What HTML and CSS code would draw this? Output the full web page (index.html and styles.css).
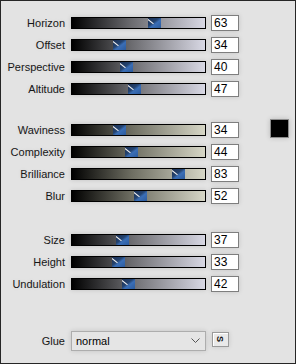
FILE: index.html
```html
<!DOCTYPE html>
<html lang="en">
<head>
    <meta charset="UTF-8">
    <title>Waves</title>
    <link rel="stylesheet" href="styles.css">
</head>
<body>
    <div class="panel">
        <div class="group">
            <div class="row"><span class="label">Horizon</span><div class="track"><span class="thumb" style="left: 75.6px"></span></div><span class="value">63</span></div>
            <div class="row"><span class="label">Offset</span><div class="track"><span class="thumb" style="left: 40.8px"></span></div><span class="value">34</span></div>
            <div class="row"><span class="label">Perspective</span><div class="track"><span class="thumb" style="left: 48px"></span></div><span class="value">40</span></div>
            <div class="row"><span class="label">Altitude</span><div class="track"><span class="thumb" style="left: 56.4px"></span></div><span class="value">47</span></div>
        </div>

        <div class="group group-waves">
            <div class="rows">
                <div class="row"><span class="label">Waviness</span><div class="track khaki"><span class="thumb" style="left: 40.8px"></span></div><span class="value">34</span></div>
                <div class="row"><span class="label">Complexity</span><div class="track khaki"><span class="thumb" style="left: 52.8px"></span></div><span class="value">44</span></div>
                <div class="row"><span class="label">Brilliance</span><div class="track khaki"><span class="thumb" style="left: 99.6px"></span></div><span class="value">83</span></div>
                <div class="row"><span class="label">Blur</span><div class="track khaki"><span class="thumb" style="left: 62.4px"></span></div><span class="value">52</span></div>
            </div>
            <div class="swatch"></div>
        </div>

        <div class="group group-size">
            <div class="row"><span class="label">Size</span><div class="track"><span class="thumb" style="left: 44.4px"></span></div><span class="value">37</span></div>
            <div class="row"><span class="label">Height</span><div class="track"><span class="thumb" style="left: 39.6px"></span></div><span class="value">33</span></div>
            <div class="row"><span class="label">Undulation</span><div class="track"><span class="thumb" style="left: 50.4px"></span></div><span class="value">42</span></div>
        </div>

        <div class="row glue">
            <span class="label">Glue</span>
            <div class="select">
                <span>normal</span>
                <svg width="9" height="6" viewBox="0 0 9 6"><path d="M0.5 0.5 L4.5 4.5 L8.5 0.5" fill="none" stroke="#555" stroke-width="1"/></svg>
            </div>
            <span class="sbtn"><span>S</span></span>
        </div>
    </div>
</body>
</html>
```

FILE: styles.css
```css
body {
    margin: 0;
    background: #e3e3e3;
}
.panel {
    width: 296px;
    height: 364px;
    box-sizing: border-box;
    border: 1px solid #262626;
    background: #e3e3e3;
    padding-top: 11px;
    font-family: "Liberation Sans", Arial, sans-serif;
    font-size: 11px;
    color: #161616;
}
.group-waves {
    display: flex;
    align-items: flex-start;
    margin-top: 19px;
}
.group-size {
    margin-top: 22px;
}
.row {
    display: flex;
    align-items: center;
    height: 22px;
}
.label {
    width: 64px;
    text-align: right;
    text-shadow: 0 0 4px rgba(0, 0, 0, 0.08);
}
.track {
    position: relative;
    width: 135px;
    height: 12px;
    margin-left: 6px;
    box-sizing: border-box;
    border: 1px solid #000;
    background: linear-gradient(to right, #000 0%, #6c6c70 45%, #d8d8e4 100%);
    box-shadow: 0 0 5px rgba(0, 0, 0, 0.14);
}
.track.khaki {
    background: linear-gradient(to right, #000 0%, #6e6e62 45%, #d6d6c6 100%);
}
.thumb {
    position: absolute;
    top: 0;
    width: 13px;
    height: 10px;
    background: linear-gradient(to bottom right, #1b2f52 0%, #24436f 42%, #3a6eb6 58%, #2c5b9d 100%);
    overflow: hidden;
}
.thumb::before {
    content: "";
    position: absolute;
    left: 0;
    top: 1px;
    width: 7px;
    height: 1px;
    background: #f2f2f2;
    transform-origin: left center;
    transform: rotate(38deg);
}
.value {
    width: 28px;
    height: 16px;
    margin-left: 5px;
    box-sizing: border-box;
    border: 1px solid #7e7e7e;
    background: #fff;
    padding-left: 2px;
    font-size: 12px;
    line-height: 14px;
    color: #000;
    box-shadow: 0 0 5px rgba(0, 0, 0, 0.14);
}
.swatch {
    width: 19px;
    height: 19px;
    margin-left: 31px;
    box-sizing: border-box;
    border: 1px solid #8c8c8c;
    background: #000;
    box-shadow: 0 0 5px rgba(0, 0, 0, 0.18);
}
.glue {
    margin-top: 35px;
}
.select {
    display: flex;
    align-items: center;
    justify-content: space-between;
    width: 135px;
    height: 20px;
    margin-left: 6px;
    box-sizing: border-box;
    border: 1px solid #adadad;
    background: #e5e5e5;
    padding: 0 5px 0 4px;
    font-size: 11px;
    color: #000;
    box-shadow: 0 0 5px rgba(0, 0, 0, 0.14);
}
.sbtn {
    display: flex;
    align-items: center;
    justify-content: center;
    width: 17px;
    height: 15px;
    margin-left: 6px;
    margin-top: -4px;
    box-sizing: border-box;
    border: 1px solid #9a9a9a;
    background: #e9e9e9;
    box-shadow: inset 1px 1px 0 #fff, 0 0 5px rgba(0, 0, 0, 0.12);
}
.sbtn span {
    display: block;
    font-size: 9px;
    font-weight: bold;
    transform: rotate(90deg);
    color: #111;
}
```
